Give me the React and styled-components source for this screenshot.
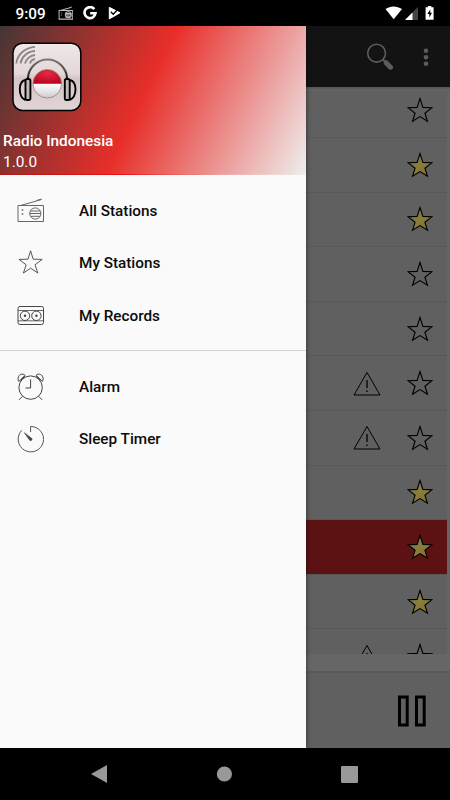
import React from 'react';
import styled, { createGlobalStyle } from 'styled-components';

const GlobalStyle = createGlobalStyle`
  * { box-sizing: border-box; }
  body { margin: 0; background: #000; font-family: Roboto, 'Liberation Sans', sans-serif; }
  svg { display: block; flex: none; }
`;

const Screen = styled.div`
  width: 450px;
  height: 800px;
  display: grid;
  grid-template-rows: 26px 722px 52px;
  overflow: hidden;
  background: #000;
`;

const StatusBar = styled.header`
  display: flex;
  align-items: center;
  padding: 0 15px 0 15.5px;
  color: #fff;
`;

const Clock = styled.span`
  width: 42px;
  font-size: 15.3px;
  font-weight: 500;
  line-height: 26px;
  padding-top: 1px;
`;

const StatusIcons = styled.div`
  display: flex;
  align-items: center;
  gap: 10.5px;
  margin-left: ${(p) => (p.$end ? 'auto' : '0')};
`;

const Body = styled.main`
  position: relative;
  overflow: hidden;
  display: grid;
  grid-template-rows: 61px 567px 17px 77px;
  background: #666;
`;

const AppBar = styled.div`
  display: flex;
  align-items: center;
  justify-content: flex-end;
  gap: 29px;
  padding-right: 21px;
  background: #131313;
`;

const StationList = styled.div`
  padding: 4px 3px 0 0;
  overflow: hidden;
  background: linear-gradient(#555, #646464 3px);
`;

const Station = styled.div`
  height: 54.6px;
  margin-top: ${(p) => (p.$first ? '-7.6px' : '0')};
  display: flex;
  align-items: center;
  justify-content: flex-end;
  gap: 26.5px;
  padding-right: 14px;
  background: ${(p) => (p.$playing ? '#5c1212' : '#606060')};
  border-bottom: 1px solid #585858;
`;

const ListClip = styled.div`
  overflow: hidden;
  height: 563px;
`;

const Player = styled.div`
  display: flex;
  align-items: center;
  justify-content: flex-end;
  padding: 0 24px 0 0;
  border-top: 2px solid #595959;
  background: #606060;
`;

const Drawer = styled.aside`
  position: absolute;
  inset: 0 auto 0 0;
  width: 306px;
  background: #fafafa;
  box-shadow: 0 0 5px rgba(0, 0, 0, 0.55);
`;

const DrawerHeader = styled.div`
  height: 149px;
  display: flex;
  flex-direction: column;
  padding: 15px 0 0 3px;
  color: #fff;
  font-size: 15.4px;
  line-height: 21px;
  border-bottom: 1px solid transparent;
  background:
    linear-gradient(116deg, #443636 0%, #e82e29 47%, #eeeeee 100%) padding-box,
    linear-gradient(90deg, #b51515 0%, #e81010 40%, #eeb0b0 75%, #eee 100%) border-box;
`;

const AppName = styled.div`
  margin-top: 19px;
  font-weight: 500;
`;

const Version = styled.div`
  font-weight: 400;
`;

const Menu = styled.nav`
  padding: ${(p) => p.$top}px 0 ${(p) => (p.$divided ? '7.5px' : '0')};
  border-bottom: ${(p) => (p.$divided ? '1px solid #d2d2d2' : 'none')};
`;

const MenuItem = styled.div`
  height: 52.5px;
  display: grid;
  grid-template-columns: 63px 1fr;
  align-items: center;
  padding-left: 16px;
  font-size: 15.3px;
  font-weight: 500;
  color: #0c0c0c;
`;

const NavBar = styled.footer`
  display: flex;
  align-items: center;
  justify-content: space-between;
  padding: 0 92px 0 91px;
`;

const STAR = 'M13 1.5L15.9 10.4L25 10.7L17.9 16.2L20.5 24.3L13 19.6L5.5 24.3L8.1 16.2L1 10.7L10.1 10.4Z';

const StarIcon = ({ fill = 'none' }) => (
  <svg width="26" height="26" viewBox="0 0 26 26">
    <defs>
      <linearGradient id="gold" x1="0" y1="0" x2="1" y2="1">
        <stop offset="0" stopColor="#6c674a" />
        <stop offset="0.5" stopColor="#8a7e3c" />
        <stop offset="1" stopColor="#7d6d28" />
      </linearGradient>
    </defs>
    <path d={STAR} fill={fill} stroke="#000" strokeWidth="1.1" />
  </svg>
);

const MenuStarIcon = () => (
  <svg width="28" height="28" viewBox="0 0 28 28">
    <path
      d="M14.6 1.8L17.2 10.2L26.2 10.4L19 15.8L21.8 24L14.6 19.2L7.4 24L10.2 15.8L3 10.4L12 10.2Z"
      fill="none"
      stroke="#444"
      strokeWidth="0.9"
    />
  </svg>
);

const WarningIcon = () => (
  <svg width="28" height="27" viewBox="0 0 28 27" fill="none" stroke="#000" strokeWidth="1">
    <path d="M14 2.5L27 25H1Z" />
    <path d="M14 10v8M14 20.5v1.6" strokeWidth="1.3" />
  </svg>
);

const RadioIcon = ({ color = '#666', size = 28 }) => (
  <svg width={size} height={size} viewBox="0 0 28 28" fill="none" stroke={color} strokeWidth={size < 20 ? 1.9 : 1}>
    <path d="M2 8.5H27.5V24.5H2Z" />
    <path d="M4.5 8.5L25.5 2.5M20.5 3.5l5-1.5" />
    <circle cx="19.3" cy="16.5" r="5.6" />
    <path d="M14.5 14h9.6M13.8 16.5h11M14.5 19.3h9.6" />
    <path d="M5.7 13h1.6M5.7 17h1.6" strokeWidth="1.6" />
  </svg>
);

const CassetteIcon = () => (
  <svg width="28" height="28" viewBox="0 0 28 28" fill="none" stroke="#444" strokeWidth="1">
    <rect x="2" y="4.5" width="25.5" height="18" rx="2" />
    <path d="M2 8.5h25.5M2 18.8h25.5" strokeWidth="0.8" />
    <circle cx="9" cy="13.8" r="4.7" />
    <circle cx="20.4" cy="13.8" r="4.7" />
    <circle cx="9" cy="13.8" r="1.2" fill="#444" stroke="none" />
    <circle cx="20.4" cy="13.8" r="1.2" fill="#444" stroke="none" />
  </svg>
);

const AlarmIcon = () => (
  <svg width="28" height="28" viewBox="0 0 28 28" fill="none" stroke="#444" strokeWidth="1">
    <circle cx="14.6" cy="14.6" r="11.7" />
    <path d="M14.6 6.3V15H9.5" />
    <path d="M2.8 8.5C1 5.5 2.7 1.5 5.7 1.2C8 1 9 2 9 2.3ZM4.5 7.5l4.5-4.5" />
    <path d="M26.4 8.5C28.2 5.5 26.5 1.5 23.5 1.2C21.2 1 20.2 2 20.2 2.3ZM24.7 7.5l-4.5-4.5" />
    <path d="M6.5 23.3L3 26.8M22.7 23.3L26.2 26.8" />
  </svg>
);

const TimerIcon = () => (
  <svg width="28" height="28" viewBox="0 0 28 28" fill="none" stroke="#555" strokeWidth="1">
    <path d="M14.6 7V1.5A12.7 12.7 0 1 1 5.8 5.3" />
    <path d="M8.3 7.7L15.9 13.5A1.5 1.5 0 0 1 13.9 15.5Z" fill="#444" stroke="#444" strokeWidth="0.6" />
  </svg>
);

const SearchIcon = () => (
  <svg width="28" height="28" viewBox="0 0 28 28" fill="none" stroke="#5c5c5c">
    <circle cx="10.6" cy="10.2" r="8.9" strokeWidth="1.6" />
    <path d="M16.9 16.5L20 19.6" strokeWidth="2.2" />
    <path d="M20.3 20L24.5 24.2" strokeWidth="5" strokeLinecap="round" />
  </svg>
);

const MoreIcon = () => (
  <svg width="6" height="20" viewBox="0 0 6 20" fill="#5c5c5c">
    <circle cx="3" cy="3.8" r="2.3" />
    <circle cx="3" cy="10.3" r="2.3" />
    <circle cx="3" cy="16.8" r="2.3" />
  </svg>
);

const PauseIcon = () => (
  <svg width="28" height="32" viewBox="0 0 28 32" fill="none" stroke="#000" strokeWidth="3">
    <path d="M1.5 2H9.2V30H1.5ZM18.5 2H26.2V30H18.5Z" />
  </svg>
);

const GoogleIcon = () => (
  <svg width="14" height="14" viewBox="0 0 14 14" fill="none" stroke="#fff" strokeWidth="2.6">
    <path d="M11.3 3.1A5.5 5.5 0 1 0 12.5 7.2H7.2" />
  </svg>
);

const PlayCheckIcon = () => (
  <svg width="13" height="14" viewBox="0 0 13 14">
    <path d="M1.3 1.3L12 6.8L1.3 12.9Z" fill="#fff" stroke="#fff" strokeWidth="1" strokeLinejoin="round" />
    <path d="M2.8 5.8L5.2 8.3L10.5 2.7" fill="none" stroke="#000" strokeWidth="1.3" />
  </svg>
);

const SignalIcons = () => (
  <svg width="50" height="16" viewBox="0 0 50 16">
    <path d="M0.5 4.1C5.5 0.5 11.5 0.5 17 4.1L8.7 14.3Z" fill="#fff" />
    <path d="M33 2V15H20Z" fill="#444" />
    <path d="M27.5 7.5V15H20Z" fill="#fff" />
    <path d="M42.8 1h3.5v1.3h2.3v12.5h-8V2.3h2.2Z" fill="#fff" />
    <path d="M45.3 4.4L42.3 9h2v3.6L47 7.7h-1.7Z" fill="#000" />
  </svg>
);

const AppLogo = () => (
  <svg width="71" height="71" viewBox="0 0 71 71">
    <defs>
      <linearGradient id="plate" x1="0" y1="0" x2="0" y2="1">
        <stop offset="0" stopColor="#f0e7e7" />
        <stop offset="0.45" stopColor="#e3d8d8" />
        <stop offset="0.52" stopColor="#d4c5c6" />
        <stop offset="1" stopColor="#e2d4d4" />
      </linearGradient>
      <radialGradient id="ballRed" cx="0.5" cy="0.25" r="0.8">
        <stop offset="0" stopColor="#e32b45" />
        <stop offset="1" stopColor="#b8001c" />
      </radialGradient>
      <linearGradient id="ballWhite" x1="0" y1="0" x2="0" y2="1">
        <stop offset="0" stopColor="#fff" />
        <stop offset="1" stopColor="#cfcbcb" />
      </linearGradient>
      <linearGradient id="band" x1="0" y1="0" x2="0" y2="1">
        <stop offset="0" stopColor="#777" />
        <stop offset="0.6" stopColor="#444" />
        <stop offset="1" stopColor="#000" />
      </linearGradient>
    </defs>
    <rect x="2" y="2.2" width="67.8" height="67.2" rx="9.5" fill="url(#plate)" stroke="#000" strokeWidth="1.5" />
    <g fill="none" stroke="#8b8585" strokeWidth="1.8">
      <path d="M5.3 22.5C6.3 13.5 14 6.5 24 5.8M9.5 22.5C10.5 16 16 10.5 24 10M14 22.5C15 18.5 19 14.5 24 14M19 22.5C19.5 20.5 21.5 18.5 24 18" />
    </g>
    <path d="M17 39V37C17.5 27 26 18.5 36.5 18.5C47 18.500 55.500 27 56 37V39" fill="none" stroke="url(#band)" strokeWidth="2" />
    <path d="M22 43A14.3 14.3 0 0 1 50.6 43Z" fill="url(#ballRed)" />
    <path d="M22 42.7A14.3 14.3 0 0 0 50.6 42.7Z" fill="url(#ballWhite)" />
    <circle cx="36.3" cy="42.7" r="14.3" fill="none" stroke="#8a7272" strokeWidth="0.7" />
    <g fill="none" stroke="#000" strokeWidth="1.9">
      <path d="M14 39C10.5 40 8.8 43 8.8 48S10.5 57.5 14.5 59" />
      <path d="M59 39C62.5 40 64.5 43 64.5 48S62.5 57.5 58.5 59" />
      <rect x="14.5" y="38" width="4.9" height="21" rx="1.8" fill="#c4b8b8" />
      <rect x="53.8" y="38" width="4.9" height="21" rx="1.8" fill="#c4b8b8" />
    </g>
  </svg>
);

const LogoSlot = styled.div`
  padding-left: 8px;
`;

const stations = [
  {},
  { fav: true },
  { fav: true },
  {},
  {},
  { warn: true },
  { warn: true },
  { fav: true },
  { fav: true, playing: true },
  { fav: true },
  { warn: true },
];

export default function App() {
  return (
    <Screen>
      <GlobalStyle />
      <StatusBar>
        <Clock>9:09</Clock>
        <StatusIcons>
          <RadioIcon color="#bbb" size={15} />
          <GoogleIcon />
          <PlayCheckIcon />
        </StatusIcons>
        <StatusIcons $end>
          <SignalIcons />
        </StatusIcons>
      </StatusBar>
      <Body>
        <AppBar>
          <SearchIcon />
          <MoreIcon />
        </AppBar>
        <StationList>
          <ListClip>
            {stations.map((s, i) => (
              <Station key={i} $playing={s.playing} $first={i === 0}>
                {s.warn && <WarningIcon />}
                <StarIcon fill={s.fav ? 'url(#gold)' : 'none'} />
              </Station>
            ))}
          </ListClip>
        </StationList>
        <div />
        <Player>
          <PauseIcon />
        </Player>
        <Drawer>
          <DrawerHeader>
            <LogoSlot>
              <AppLogo />
            </LogoSlot>
            <AppName>Radio Indonesia</AppName>
            <Version>1.0.0</Version>
          </DrawerHeader>
          <Menu $top={9.5} $divided>
            <MenuItem><RadioIcon />All Stations</MenuItem>
            <MenuItem><MenuStarIcon />My Stations</MenuItem>
            <MenuItem><CassetteIcon />My Records</MenuItem>
          </Menu>
          <Menu $top={10}>
            <MenuItem><AlarmIcon />Alarm</MenuItem>
            <MenuItem><TimerIcon />Sleep Timer</MenuItem>
          </Menu>
        </Drawer>
      </Body>
      <NavBar>
        <svg width="16" height="18" viewBox="0 0 16 18"><path d="M0 9L16 0V18Z" fill="#999" /></svg>
        <svg width="16" height="16" viewBox="0 0 16 16"><circle cx="8.4" cy="8" r="7.6" fill="#999" /></svg>
        <svg width="17" height="17" viewBox="0 0 17 17"><rect width="17" height="17" rx="1" fill="#999" /></svg>
      </NavBar>
    </Screen>
  );
}
